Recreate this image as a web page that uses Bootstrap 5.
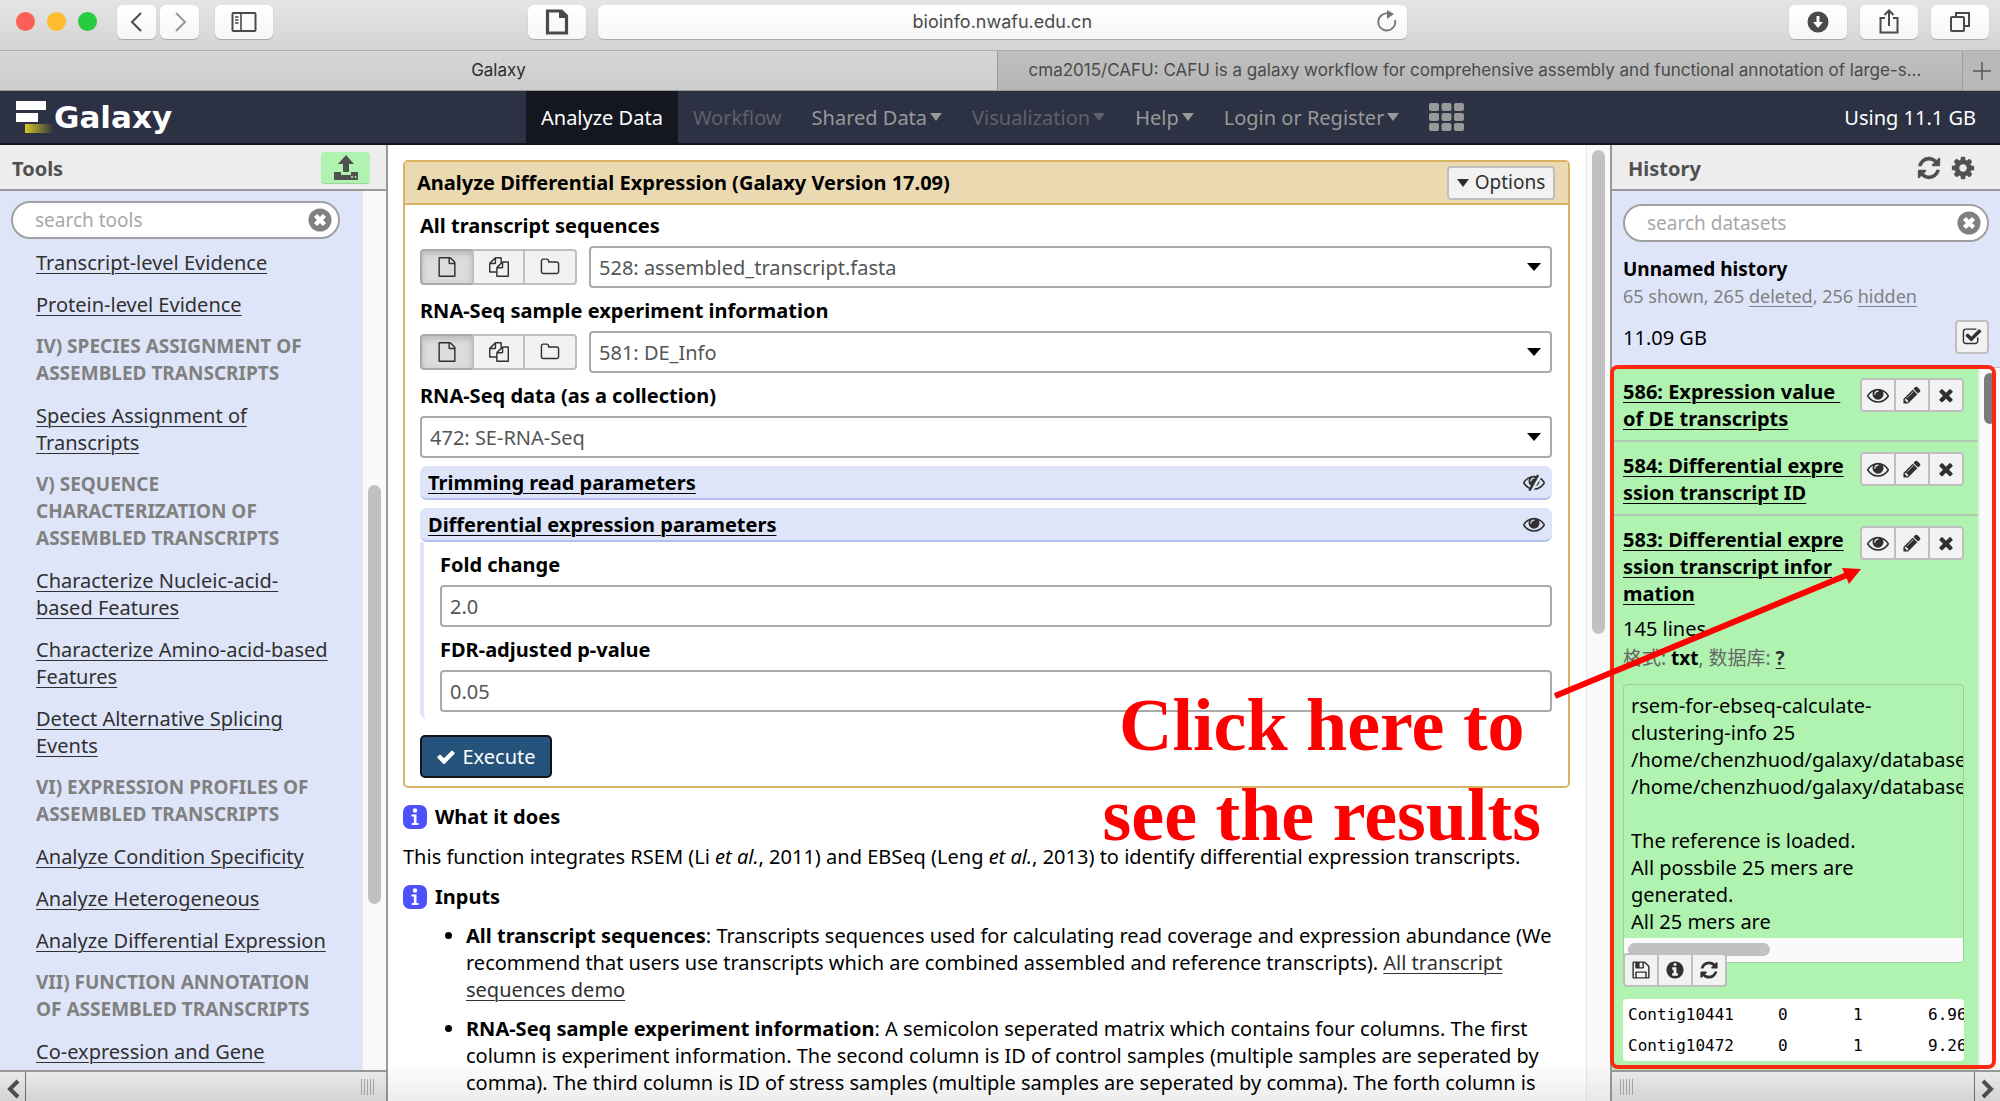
<!DOCTYPE html>
<html lang="en">
<head>
<meta charset="utf-8">
<meta name="viewport" content="width=device-width, initial-scale=1">
<title>Galaxy</title>
<link rel="stylesheet" href="https://cdn.jsdelivr.net/npm/bootstrap@5.3.0/dist/css/bootstrap.min.css">
<style>
  body { font-family: "Noto Sans", "Noto Sans CJK SC", sans-serif; font-size: 20px; line-height: 27px; color: #000; background: #fff; }
  a { color: #303030; text-underline-offset: 3px; text-decoration-thickness: 1px; }
  button { font: inherit; }
  .ico { width: 20px; height: 20px; fill: currentColor; flex: none; display: block; }

  /* browser window */
  .chrome-font { font-family: Inter, "Liberation Sans", sans-serif; color: #3c3c3c; }
  .toolbar { height: 51px; padding: 5px 11px 12px 16px; background: linear-gradient(#e5e5e5, #d4d4d4); border-bottom: 1px solid #adadad; }
  .dot { width: 19px; height: 19px; border-radius: 50%; margin-right: 12px; }
  .tbtn { height: 34px; width: 58px; padding: 0; border: 0; border-radius: 6px; background: linear-gradient(#fff, #f6f6f6); box-shadow: 0 1px 1px #a5a5a5; color: #4a4a4a; display: flex; align-items: center; justify-content: center; }
  .tbtn.half { width: 39px; }
  .tbtn svg { width: 28px; height: 28px; fill: none; stroke: currentColor; stroke-width: 2; }
  .addr { width: 41%; height: 34px; border-radius: 6px; background: linear-gradient(#fff, #f6f6f6); box-shadow: 0 1px 1px #a5a5a5; font-size: 18px; color: #4a4a4a; position: relative; }
  .addr input { border: 0; background: none; width: 100%; height: 34px; text-align: center; color: inherit; font: inherit; }
  .addr button { position: absolute; right: 8px; top: 5px; border: 0; background: none; padding: 0; color: #777; }
  .space-l { flex: 2; }
  .space-r { flex: 3; }
  .tabs { height: 40px; font-size: 17px; border-bottom: 1px solid #999; background: #b9b9b9; }
  .tabs a { color: #4a4a4a; text-decoration: none; display: flex; align-items: center; justify-content: center; white-space: nowrap; }
  .tab-on { background: linear-gradient(#d6d6d6, #cdcdcd); flex: 0 0 49.85%; }
  .tabs .tab-on { color: #2c2c2c; }
  .tab-off { border-left: 1px solid #9c9c9c; background: linear-gradient(#c0c0c0, #b5b5b5); padding-right: 10px; }
  .tab-add { width: 38px; border: 0; border-left: 1px solid #9c9c9c; background: none; padding: 0; color: #555; }

  /* masthead */
  .masthead { height: 54px; background: #2c3143; border-bottom: 2px solid #14161f; }
  .brand { font-family: "DejaVu Sans", sans-serif; font-weight: 700; font-size: 31px; color: #fff; text-decoration: none; width: 526px; }
  .masthead nav a { color: #999; text-decoration: none; padding: 0 15px; height: 52px; display: flex; align-items: center; white-space: nowrap; }
  .masthead nav a.on { background: #151720; color: #fff; }
  .masthead nav a.off { color: #5f6169; }
  .tri::after { content: ""; border: 6px solid transparent; border-top: 8px solid; border-bottom: 0; margin-left: 3px; }

  /* side panels */
  .side { background: #dfe5f9; display: flex; flex-direction: column; min-height: 0; min-width: 0; }
  .side-left { flex: 0 0 388px; border-right: 2px solid #999; }
  .side-right { flex: 0 0 390px; border-left: 2px solid #999; }
  .side-head { height: 46px; flex: none; background: #ededed; border-bottom: 2px solid #999; color: #505050; font-weight: 700; padding-top: 2px; }
  .upload { width: 49px; height: 32px; background: #b0f3b0; border: 0; border-bottom: 1px solid #9bd69b; border-radius: 4px; color: #505050; padding: 0; }
  .iconbtn { border: 0; background: none; padding: 0; color: #505050; }
  .pill { position: relative; font-size: 19px; }
  .pill input { width: 100%; height: 38px; border: 2px solid #a0a0a0; border-radius: 19px; padding: 0 40px 0 22px; background: #fff; color: #555; }
  .pill input::placeholder { color: #a8a8a8; }
  .pill button { position: absolute; right: 8px; top: 7px; }
  .foot { height: 31px; flex: none; background: linear-gradient(#ededed, #e4e4e4); border-top: 2px solid #999; color: #505050; }
  .foot button { width: 26px; border: 0; background: none; padding: 0; color: inherit; }
  .grip { width: 13px; height: 16px; background: repeating-linear-gradient(90deg, #aaa 0 1px, transparent 1px 3px); }
  .gutter { width: 24px; flex: none; background: #fafafa; border-left: 1px solid #e8e8e8; position: relative; }
  .thumb { position: absolute; left: 5px; width: 13px; border-radius: 7px; background: #c1c1c1; }

  .toollist { padding: 10px 20px 0 36px; overflow: hidden; }
  .toollist a, .toollist h2 { display: block; font-size: 20px; line-height: 27px; margin: 0 0 15px; white-space: nowrap; }
  .toollist h2 { color: #808080; font-weight: 700; font-size: 19px; }

  /* tool form */
  .work { flex: 1; min-width: 0; padding: 15px 16px 0 15px; overflow: hidden; }
  .tool { border: 2px solid #d8b365; border-radius: 5px; }
  .tool-head { background: #ebd9b2; border-bottom: 2px solid #d8b365; height: 43px; padding: 0 13px 0 12px; }
  .tool-head h1, .tool label, .helptext h2 { font-size: 20px; font-weight: 700; line-height: 27px; margin: 0; }
  .galbtn { background: #f2f2f2; border: 2px solid #bfbfbf; border-radius: 4px; color: #303030; padding: 0; display: flex; align-items: center; justify-content: center; }
  .opts { width: 108px; height: 34px; gap: 6px; font-size: 19px; }
  .opts::before { content: ""; border: 6px solid transparent; border-top: 8px solid; border-bottom: 0; }
  .tool-body { padding: 7px 16px 8px 15px; }
  .tool-body label { display: block; margin-bottom: 7px; }
  .gap-b { margin-bottom: 9px; }
  .pick { position: relative; flex: 1; }
  .pick::after { content: ""; position: absolute; right: 11px; top: 17px; border: 7px solid transparent; border-top: 8px solid #000; border-bottom: 0; pointer-events: none; }
  .field { width: 100%; height: 42px; border: 2px solid #aaa; border-radius: 4px; background: #fff; color: #555; padding: 0 8px; appearance: none; display: block; font: inherit; }
  .srcs { width: 157px; height: 36px; }
  .srcs .galbtn { flex: 1; border-radius: 0; border-right-width: 0; }
  .srcs .galbtn:first-child { border-radius: 4px 0 0 4px; }
  .srcs .galbtn:last-child { border-radius: 0 4px 4px 0; border-right-width: 2px; }
  .srcs .galbtn.pressed { background: #dcdcdc; box-shadow: inset 0 3px 6px #b8b8b8; border-color: #aaa; }
  .sect { height: 34px; background: #dfe5f9; border-bottom: 2px solid #b4c1f0; border-radius: 7px; padding: 0 7px 0 8px; font-weight: 700; margin-top: 8px; }
  .sect a { color: #000; }
  .sect svg { color: #303030; }
  .nested { border-left: 4px solid #dfe5f9; border-bottom-left-radius: 7px; padding: 9px 0 7px 16px; margin-bottom: 16px; }
  .run { width: 132px; height: 43px; background: #25537b; border: 2px solid #10131a; border-radius: 5px; color: #fff; padding: 0; gap: 6px; }
  .helptext { padding-top: 15px; }
  .helptext ul { padding-left: 63px; margin: 12px 0 0; }
  .helptext li { margin-bottom: 12px; padding: 0; white-space: nowrap; }
  .helptext p { margin: 13px 0; white-space: nowrap; }

  /* history */
  .meta { padding: 13px 11px 0 11px; height: 177px; flex: none; border-bottom: 1px solid #bfbfbf; }
  .meta-row { margin-top: 10px; }
  .hist { flex: 1; min-height: 0; position: relative; background: #fafafa; }
  .sets { background: #b0f3b0; overflow: hidden; flex: 1; min-width: 0; border-right: 2px solid #e6efe6; }
  .frame { position: absolute; inset: -3px 4px 1px -2px; border: 4px solid #ff2712; border-radius: 8px; pointer-events: none; }
  .entry { padding: 10px 14px 8px 11px; border-bottom: 2px solid #b0c9b0; }
  .entry h3 { font-size: 20px; line-height: 27px; margin: 0; white-space: nowrap; }
  .entry h3 a { color: #000; font-weight: 700; }
  .trio { width: 104px; height: 34px; flex: none; }
  .trio .galbtn { flex: 1; border-radius: 0; border-right-width: 0; }
  .trio .galbtn:first-child { border-radius: 4px 0 0 4px; }
  .trio .galbtn:last-child { border-radius: 0 4px 4px 0; border-right-width: 2px; }
  .log { border: 1px solid #9cce9c; border-radius: 4px; height: 279px; margin-top: 12px; overflow: hidden; display: flex; flex-direction: column; }
  .log pre { margin: 0; padding: 7px 0 0 7px; font: inherit; overflow: hidden; flex: 1; }
  .hbar { height: 24px; flex: none; background: #fafafa; padding: 5px 4px; }
  .hbar div { width: 142px; height: 13px; border-radius: 7px; background: #c1c1c1; }
  .over { margin-top: -10px; position: relative; }
  .peek { background: #fff; border-radius: 4px; margin-top: 12px; overflow: hidden; }
  .peek table { font-family: "DejaVu Sans Mono", monospace; font-size: 16px; line-height: 31px; white-space: nowrap; table-layout: fixed; width: 400px; }
  .peek td { padding: 0 0 0 5px; }

  /* annotation over the page */
  .note { position: absolute; top: 680px; right: 459px; font: 700 74px/90px "Liberation Serif", serif; color: #f00; text-align: center; pointer-events: none; }
  .arrow { position: absolute; top: 560px; right: 130px; width: 320px; height: 145px; pointer-events: none; }
  .fade-low { position: absolute; left: 0; right: 0; bottom: 0; height: 40px; background: linear-gradient(transparent, rgba(0,0,0,.07)); pointer-events: none; }
</style>
<script src="https://cdn.jsdelivr.net/npm/bootstrap@5.3.0/dist/js/bootstrap.bundle.min.js"></script>
</head>
<body class="d-flex flex-column vh-100 overflow-hidden position-relative">
<svg class="d-none" xmlns="http://www.w3.org/2000/svg">
  <symbol id="i-eye" viewBox="0 0 1792 1792"><path d="M1664 960q-152-236-381-353 61 104 61 225 0 185-131.500 316.500t-316.500 131.500-316.500-131.500-131.500-316.500q0-121 61-225-229 117-381 353 133 205 333.500 326.500t434.500 121.500 434.500-121.500 333.500-326.500zm-720-384q0-20-14-34t-34-14q-125 0-214.500 89.500t-89.500 214.500q0 20 14 34t34 14 34-14 14-34q0-86 61-147t147-61q20 0 34-14t14-34zm848 384q0 34-20 69-140 230-376.500 368.500t-499.500 138.500-499.500-139-376.500-368q-20-35-20-69t20-69q140-229 376.500-368t499.500-139 499.500 139 376.500 368q20 35 20 69z"/></symbol>
  <symbol id="i-eyeslash" viewBox="0 0 1792 1792"><path d="M555 1335l78-141q-87-63-136-159t-49-203q0-121 61-225-229 117-381 353 167 258 427 375zm389-759q0-20-14-34t-34-14q-125 0-214.500 89.500t-89.500 214.500q0 20 14 34t34 14 34-14 14-34q0-86 61-147t147-61q20 0 34-14t14-34zm363-191q0 7-1 9-106 189-316 567t-315 566l-49 89q-10 16-28 16-12 0-134-70-16-10-16-28 0-12 44-87-143-65-263.500-173t-208.500-245q-20-31-20-69t20-69q153-235 380-371t496-136q89 0 180 17l54-97q10-16 28-16 5 0 18 6t31 15.500 33 18.500 31.500 18.500 19.500 11.500q16 10 16 27zm37 447q0 139-79 253.500t-209 164.500l280-502q8 45 8 84zm448 128q0 35-20 69-39 64-109 145-150 172-347.500 267t-419.500 95l74-132q212-18 392.500-137t301.500-307q-115-179-282-294l63-112q95 64 182.500 153t144.500 184q20 34 20 69z"/></symbol>
  <symbol id="i-pencil" viewBox="0 0 1792 1792"><path d="M491 1536l91-91-235-235-91 91v107h128v128h107zm523-928q0-22-22-22-10 0-17 7l-542 542q-7 7-7 17 0 22 22 22 10 0 17-7l542-542q7-7 7-17zm-54-192l416 416-832 832h-416v-416zm683 96q0 53-37 90l-166 166-416-416 166-165q36-38 90-38 53 0 91 38l235 234q37 39 37 91z"/></symbol>
  <symbol id="i-times" viewBox="0 0 1792 1792"><path d="M1490 1322q0 40-28 68l-136 136q-28 28-68 28t-68-28l-294-294-294 294q-28 28-68 28t-68-28l-136-136q-28-28-28-68t28-68l294-294-294-294q-28-28-28-68t28-68l136-136q28-28 68-28t68 28l294 294 294-294q28-28 68-28t68 28l136 136q28 28 28 68t-28 68l-294 294 294 294q28 28 28 68z"/></symbol>
  <symbol id="i-clear" viewBox="0 0 24 24"><circle cx="12" cy="12" r="11.500" fill="#808080"/><path d="M7.500 7.500l9 9M16.500 7.500l-9 9" stroke="#fff" stroke-width="4.400"/></symbol>
  <symbol id="i-cog" viewBox="0 0 1792 1792"><path d="M1152 896q0-106-75-181t-181-75-181 75-75 181 75 181 181 75 181-75 75-181zm512-109v222q0 12-8 23t-20 13l-185 28q-19 54-39 91 35 50 107 138 10 12 10 25t-9 23q-27 37-99 108t-94 71q-12 0-26-9l-138-108q-44 23-91 38-16 136-29 186-7 28-36 28h-222q-14 0-24.500-8.500t-11.500-21.500l-28-184q-49-16-90-37l-141 107q-10 9-25 9-14 0-25-11-126-114-165-168-7-10-7-23 0-12 8-23 15-21 51-66.500t54-70.500q-27-50-41-99l-183-27q-13-2-21-12.500t-8-23.500v-222q0-12 8-23t19-13l186-28q14-46 39-92-40-57-107-138-10-12-10-24 0-10 9-23 26-36 98.500-107.500t94.500-71.500q13 0 26 10l138 107q44-23 91-38 16-136 29-186 7-28 36-28h222q14 0 24.500 8.500t11.500 21.500l28 184q49 16 90 37l142-107q9-9 24-9 13 0 25 10 129 119 165 170 7 8 7 22 0 12-8 23-15 21-51 66.500t-54 70.500q26 50 41 98l183 28q13 2 21 12.500t8 23.500z"/></symbol>
  <symbol id="i-refresh" viewBox="0 0 1792 1792"><path d="M1639 1056q0 5-1 7-64 268-268 434.500t-478 166.500q-146 0-282.500-55t-243.500-157l-129 129q-19 19-45 19t-45-19-19-45v-448q0-26 19-45t45-19h448q26 0 45 19t19 45-19 45l-137 137q71 66 161 102t187 36q134 0 250-65t186-179q11-17 53-117 8-23 30-23h192q13 0 22.500 9.500t9.500 22.500zm25-800v448q0 26-19 45t-45 19h-448q-26 0-45-19t-19-45 19-45l138-138q-148-137-349-137-134 0-250 65t-186 179q-11 17-53 117-8 23-30 23h-199q-13 0-22.500-9.500t-9.500-22.500v-7q65-268 270-434.500t480-166.500q146 0 284 55.500t245 156.500l130-129q19-19 45-19t45 19 19 45z"/></symbol>
  <symbol id="i-info" viewBox="0 0 1792 1792"><path d="M1152 1376v-160q0-14-9-23t-23-9h-96v-512q0-14-9-23t-23-9h-320q-14 0-23 9t-9 23v160q0 14 9 23t23 9h96v320h-96q-14 0-23 9t-9 23v160q0 14 9 23t23 9h448q14 0 23-9t9-23zm-128-896v-160q0-14-9-23t-23-9h-192q-14 0-23 9t-9 23v160q0 14 9 23t23 9h192q14 0 23-9t9-23zm640 416q0 209-103 385.500t-279.500 279.500-385.500 103-385.500-103-279.500-279.500-103-385.500 103-385.500 279.500-279.500 385.500-103 385.500 103 279.500 279.500 103 385.500z"/></symbol>
  <symbol id="i-check" viewBox="0 0 1792 1792"><path d="M1671 566q0 40-28 68l-724 724-136 136q-28 28-68 28t-68-28l-136-136-362-362q-28-28-28-68t28-68l136-136q28-28 68-28t68 28l294 295 656-657q28-28 68-28t68 28l136 136q28 28 28 68z"/></symbol>
  <symbol id="i-save" viewBox="0 0 1792 1792"><path d="M512 1536h768v-384h-768v384zm896 0h128v-896q0-14-10-38.500t-20-34.500l-281-281q-10-10-34-20t-39-10v416q0 40-28 68t-68 28h-576q-40 0-68-28t-28-68v-416h-128v1280h128v-416q0-40 28-68t68-28h832q40 0 68 28t28 68v416zm-384-928v-320q0-13-9.500-22.500t-22.500-9.500h-192q-13 0-22.500 9.500t-9.500 22.500v320q0 13 9.500 22.500t22.500 9.500h192q13 0 22.500-9.500t9.500-22.500zm640 32v928q0 40-28 68t-68 28h-1344q-40 0-68-28t-28-68v-1344q0-40 28-68t68-28h928q40 0 88 20t76 48l280 280q28 28 48 76t20 88z"/></symbol>
  <symbol id="i-file" viewBox="0 0 1792 1792"><path d="M1596 380q28 28 48 76t20 88v1152q0 40-28 68t-68 28h-1344q-40 0-68-28t-28-68v-1600q0-40 28-68t68-28h896q40 0 88 20t76 48zm-444-244v376h376q-10-29-22-41l-313-313q-12-12-41-22zm384 1528v-1024h-416q-40 0-68-28t-28-68v-416h-768v1536h1280z"/></symbol>
  <symbol id="i-files" viewBox="0 0 1792 1792"><path d="M1696 384q40 0 68 28t28 68v1216q0 40-28 68t-68 28h-960q-40 0-68-28t-28-68v-288h-544q-40 0-68-28t-28-68v-672q0-40 20-88t48-76l408-408q28-28 76-48t88-20h416q40 0 68 28t28 68v328q68-40 128-40h416zm-544 213l-299 299h299v-299zm-640-384l-299 299h299v-299zm196 647l316-316v-416h-384v416q0 40-28 68t-68 28h-416v640h512v-256q0-40 20-88t48-76zm956 804v-1152h-384v416q0 40-28 68t-68 28h-416v640h896z"/></symbol>
  <symbol id="i-folder" viewBox="0 0 1792 1792"><path d="M1600 1312v-704q0-40-28-68t-68-28h-704q-40 0-68-28t-28-68v-64q0-40-28-68t-68-28h-320q-40 0-68 28t-28 68v960q0 40 28 68t68 28h1216q40 0 68-28t28-68zm128-704v704q0 92-66 158t-158 66h-1216q-92 0-158-66t-66-158v-960q0-92 66-158t158-66h320q92 0 158 66t66 158v32h672q92 0 158 66t66 158z"/></symbol>
  <symbol id="i-tick" viewBox="0 0 1792 1792"><path d="M1472 930v318q0 119-84.500 203.500t-203.500 84.500h-832q-119 0-203.500-84.500t-84.500-203.500v-832q0-119 84.500-203.500t203.500-84.500h832q63 0 117 25 15 7 18 23 3 17-9 29l-49 49q-10 10-23 10-3 0-9-2-23-6-45-6h-832q-66 0-113 47t-47 113v832q0 66 47 113t113 47h832q66 0 113-47t47-113v-254q0-13 9-22l64-64q10-10 23-10 6 0 12 3 20 8 20 29zm231-489l-814 814q-24 24-57 24t-57-24l-430-430q-24-24-24-57t24-57l110-110q24-24 57-24t57 24l263 263 647-647q24-24 57-24t57 24l110 110q24 24 24 57t-24 57z"/></symbol>
  <symbol id="i-infobox" viewBox="0 0 24 24"><rect width="24" height="24" rx="7" fill="#4e50fb"/><circle cx="12" cy="5.500" r="2.200" fill="#fff"/><path d="M8.500 9.500h5v8.500h2v2H8.800v-2h2v-6.500H8.500z" fill="#fff"/></symbol>
</svg>

<header class="chrome-font">
  <div class="toolbar d-flex align-items-center">
    <span class="dot" style="background:#fc5f57"></span>
    <span class="dot" style="background:#fdbd2e"></span>
    <span class="dot" style="background:#28ca41"></span>
    <button class="tbtn half ms-2 me-1" aria-label="Back"><svg viewBox="0 0 28 28"><path d="M18 5l-9 9 9 9"/></svg></button>
    <button class="tbtn half me-3" aria-label="Forward"><svg viewBox="0 0 28 28" opacity=".55"><path d="M10 5l9 9-9 9"/></svg></button>
    <button class="tbtn" aria-label="Sidebar"><svg viewBox="0 0 28 28"><rect x="2.500" y="5" width="23" height="18" rx="1"/><path d="M11 5v18M5 9h3.500M5 12h3.500M5 15h3.500" stroke-width="1.600"/></svg></button>
    <div class="space-l"></div>
    <button class="tbtn me-2" aria-label="Page"><svg viewBox="0 0 28 28"><path d="M4.500 3h14l5 5v17h-19z" stroke-width="3.200"/><path d="M17 3v6h6" fill="currentColor"/></svg></button>
    <div class="addr ms-1">
      <input type="text" value="bioinfo.nwafu.edu.cn" aria-label="Address">
      <button aria-label="Reload"><svg class="ico" viewBox="0 0 24 24" style="width:24px;height:24px"><path d="M20 10a8.500 8.500 0 1 1-6-6.200" fill="none" stroke="currentColor" stroke-width="1.800"/><path d="M12 0l7 4-7 5z"/></svg></button>
    </div>
    <div class="space-r"></div>
    <div class="d-flex" style="gap:13px">
      <button class="tbtn" aria-label="Downloads"><svg viewBox="0 0 28 28"><circle cx="14" cy="14" r="10.500" fill="currentColor" stroke="none"/><path d="M14 8v9" stroke="#fff" stroke-width="3"/><path d="M9 14h10l-5 6z" fill="#fff" stroke="none"/></svg></button>
      <button class="tbtn" aria-label="Share"><svg viewBox="0 0 28 28"><path d="M10 10H5.500v14.500h17V10H18M14 18V3M9.500 7L14 2.500 18.500 7"/></svg></button>
      <button class="tbtn" aria-label="Tabs"><svg viewBox="0 0 28 28"><rect x="5" y="9" width="13" height="14" rx="1"/><path d="M10 8V5h13v13h-4"/></svg></button>
    </div>
  </div>
  <div class="tabs d-flex">
    <a href="#" class="tab-on">Galaxy</a>
    <a href="#" class="tab-off flex-fill">cma2015/CAFU: CAFU is a galaxy workflow for comprehensive assembly and functional annotation of large-s...</a>
    <button class="tab-add" aria-label="New tab"><svg width="20" height="20" viewBox="0 0 20 20"><path d="M10 1v18M1 10h18" stroke="currentColor" stroke-width="1.500"/></svg></button>
  </div>
</header>

<div class="masthead d-flex align-items-center flex-shrink-0">
  <a href="#" class="brand d-flex align-items-center ps-3">
    <svg width="38" height="34" viewBox="0 0 38 34"><defs><linearGradient id="gold"><stop offset="0" stop-color="#d8c62a"/><stop offset="1" stop-color="#d8c62a" stop-opacity="0"/></linearGradient></defs><rect y="1" width="30" height="9" fill="#fff"/><rect y="13" width="22" height="9" fill="#fff"/><rect x="9" y="24" width="29" height="9" fill="url(#gold)"/></svg>
    <span>Galaxy</span>
  </a>
  <nav class="d-flex align-items-center">
    <a href="#" class="on">Analyze Data</a>
    <a href="#" class="off">Workflow</a>
    <a href="#" class="tri">Shared Data</a>
    <a href="#" class="tri off">Visualization</a>
    <a href="#" class="tri">Help</a>
    <a href="#" class="tri">Login or Register</a>
    <a href="#" aria-label="Apps"><svg width="35" height="28" viewBox="0 0 35 28" fill="#999"><g id="r3"><rect width="10" height="8" rx="2"/><rect x="12.500" width="10" height="8" rx="2"/><rect x="25" width="10" height="8" rx="2"/></g><use href="#r3" y="10"/><use href="#r3" y="20"/></svg></a>
  </nav>
  <span class="ms-auto text-white me-4">Using 11.1 GB</span>
</div>

<main class="d-flex flex-fill" style="min-height:0">
  <aside class="side side-left">
    <div class="side-head d-flex align-items-center justify-content-between ps-2 pe-3"><span class="ps-1">Tools</span>
      <button class="upload d-flex align-items-center justify-content-center" aria-label="Upload"><svg class="ico" viewBox="0 0 26 26" style="width:26px;height:26px"><path d="M13 0l8 9h-5v8h-6V9H5zM1 17h7v3h10v-3h7v7q0 1-1 1H2q-1 0-1-1z"/><circle cx="19" cy="22" r="1" fill="#b0f3b0"/><circle cx="22.500" cy="22" r="1" fill="#b0f3b0"/></svg></button>
    </div>
    <div class="d-flex flex-fill" style="min-height:0">
      <div class="flex-fill overflow-hidden">
        <div class="pill" style="margin:10px 22px 0 11px"><input type="text" placeholder="search tools" aria-label="search tools"><button class="iconbtn" aria-label="Clear"><svg class="ico" style="width:24px;height:24px"><use href="#i-clear"/></svg></button></div>
        <div class="toollist">
          <a href="#">Transcript-level Evidence</a>
          <a href="#">Protein-level Evidence</a>
          <h2>IV) SPECIES ASSIGNMENT OF<br>ASSEMBLED TRANSCRIPTS</h2>
          <a href="#">Species Assignment of<br>Transcripts</a>
          <h2>V) SEQUENCE<br>CHARACTERIZATION OF<br>ASSEMBLED TRANSCRIPTS</h2>
          <a href="#">Characterize Nucleic-acid-<br>based Features</a>
          <a href="#">Characterize Amino-acid-based<br>Features</a>
          <a href="#">Detect Alternative Splicing<br>Events</a>
          <h2>VI) EXPRESSION PROFILES OF<br>ASSEMBLED TRANSCRIPTS</h2>
          <a href="#">Analyze Condition Specificity</a>
          <a href="#">Analyze Heterogeneous</a>
          <a href="#">Analyze Differential Expression</a>
          <h2>VII) FUNCTION ANNOTATION<br>OF ASSEMBLED TRANSCRIPTS</h2>
          <a href="#">Co-expression and Gene</a>
        </div>
      </div>
      <div class="gutter"><div class="thumb" style="top:33.400%;height:47.700%"></div></div>
    </div>
    <div class="foot d-flex align-items-center justify-content-between pe-2">
      <button class="border-end border-secondary h-100" aria-label="Hide tools"><svg width="16" height="20" viewBox="0 0 16 20"><path d="M13 2l-8 8 8 8" fill="none" stroke="currentColor" stroke-width="4"/></svg></button>
      <span class="grip me-1"></span>
    </div>
  </aside>

  <section class="d-flex flex-fill" style="min-width:0">
    <div class="work">
      <form class="tool">
        <div class="tool-head d-flex align-items-center justify-content-between">
          <h1>Analyze Differential Expression (Galaxy Version 17.09)</h1>
          <button type="button" class="galbtn opts">Options</button>
        </div>
        <div class="tool-body">
          <label for="f1">All transcript sequences</label>
          <div class="d-flex align-items-center gap-b">
            <div class="srcs d-flex me-2">
              <button type="button" class="galbtn pressed" aria-label="Single"><svg class="ico"><use href="#i-file"/></svg></button>
              <button type="button" class="galbtn" aria-label="Multiple"><svg class="ico"><use href="#i-files"/></svg></button>
              <button type="button" class="galbtn" aria-label="Collection"><svg class="ico"><use href="#i-folder"/></svg></button>
            </div>
            <div class="pick ms-1"><select id="f1" class="field"><option>528: assembled_transcript.fasta</option></select></div>
          </div>
          <label for="f2">RNA-Seq sample experiment information</label>
          <div class="d-flex align-items-center gap-b">
            <div class="srcs d-flex me-2">
              <button type="button" class="galbtn pressed" aria-label="Single"><svg class="ico"><use href="#i-file"/></svg></button>
              <button type="button" class="galbtn" aria-label="Multiple"><svg class="ico"><use href="#i-files"/></svg></button>
              <button type="button" class="galbtn" aria-label="Collection"><svg class="ico"><use href="#i-folder"/></svg></button>
            </div>
            <div class="pick ms-1"><select id="f2" class="field"><option>581: DE_Info</option></select></div>
          </div>
          <label for="f3">RNA-Seq data (as a collection)</label>
          <div class="pick"><select id="f3" class="field"><option>472: SE-RNA-Seq</option></select></div>
          <div class="sect d-flex align-items-center justify-content-between"><a href="#">Trimming read parameters</a><svg class="ico" style="width:22px;height:22px"><use href="#i-eyeslash"/></svg></div>
          <div class="sect d-flex align-items-center justify-content-between"><a href="#">Differential expression parameters</a><svg class="ico" style="width:22px;height:22px"><use href="#i-eye"/></svg></div>
          <div class="nested">
            <label for="f4">Fold change</label>
            <input id="f4" type="text" class="field gap-b" value="2.0">
            <label for="f5">FDR-adjusted p-value</label>
            <input id="f5" type="text" class="field" value="0.05">
          </div>
          <button type="button" class="run d-flex align-items-center justify-content-center"><svg class="ico"><use href="#i-check"/></svg>Execute</button>
        </div>
      </form>
      <div class="helptext">
        <div class="d-flex align-items-center gap-2"><svg class="ico" style="width:24px;height:24px"><use href="#i-infobox"/></svg><h2>What it does</h2></div>
        <p>This function integrates RSEM (Li <em>et al.</em>, 2011) and EBSeq (Leng <em>et al.</em>, 2013) to identify differential expression transcripts.</p>
        <div class="d-flex align-items-center gap-2"><svg class="ico" style="width:24px;height:24px"><use href="#i-infobox"/></svg><h2>Inputs</h2></div>
        <ul>
          <li><b>All transcript sequences</b>: Transcripts sequences used for calculating read coverage and expression abundance (We<br>recommend that users use transcripts which are combined assembled and reference transcripts). <a href="#">All transcript<br>sequences demo</a></li>
          <li><b>RNA-Seq sample experiment information</b>: A semicolon seperated matrix which contains four columns. The first<br>column is experiment information. The second column is ID of control samples (multiple samples are seperated by<br>comma). The third column is ID of stress samples (multiple samples are seperated by comma). The forth column is</li>
        </ul>
      </div>
    </div>
    <div class="gutter"><div class="thumb" style="top:5px;height:50.600%"></div></div>
  </section>

  <aside class="side side-right">
    <div class="side-head d-flex align-items-center ps-3"><span class="me-auto">History</span>
      <button class="iconbtn me-2" aria-label="Refresh"><svg class="ico" style="width:26px;height:26px"><use href="#i-refresh"/></svg></button>
      <button class="iconbtn me-4" aria-label="Settings"><svg class="ico" style="width:26px;height:26px"><use href="#i-cog"/></svg></button>
    </div>
    <div class="meta">
      <div class="pill"><input type="text" placeholder="search datasets" aria-label="search datasets"><button class="iconbtn" aria-label="Clear"><svg class="ico" style="width:24px;height:24px"><use href="#i-clear"/></svg></button></div>
      <div class="fw-bold" style="margin-top:14px;font-size:19px">Unnamed history</div>
      <div style="color:#808080;font-size:18px">65 shown, 265 <a href="#" style="color:inherit">deleted</a>, 256 <a href="#" style="color:inherit">hidden</a></div>
      <div class="meta-row d-flex align-items-center justify-content-between"><span>11.09 GB</span><button class="galbtn" style="width:34px;height:34px" aria-label="Select datasets"><svg class="ico"><use href="#i-tick"/></svg></button></div>
    </div>
    <div class="hist d-flex">
      <div class="sets">
        <div class="entry d-flex justify-content-between">
          <h3><a href="#">586: Expression value&nbsp;<br>of DE transcripts</a></h3>
          <div class="trio d-flex"><button class="galbtn" aria-label="View"><svg class="ico" style="width:22px;height:22px"><use href="#i-eye"/></svg></button><button class="galbtn" aria-label="Edit"><svg class="ico"><use href="#i-pencil"/></svg></button><button class="galbtn" aria-label="Delete"><svg class="ico"><use href="#i-times"/></svg></button></div>
        </div>
        <div class="entry d-flex justify-content-between">
          <h3><a href="#">584: Differential expre<br>ssion transcript ID</a></h3>
          <div class="trio d-flex"><button class="galbtn" aria-label="View"><svg class="ico" style="width:22px;height:22px"><use href="#i-eye"/></svg></button><button class="galbtn" aria-label="Edit"><svg class="ico"><use href="#i-pencil"/></svg></button><button class="galbtn" aria-label="Delete"><svg class="ico"><use href="#i-times"/></svg></button></div>
        </div>
        <div class="entry border-0">
          <div class="d-flex justify-content-between">
            <h3><a href="#">583: Differential expre<br>ssion transcript infor<br>mation</a></h3>
            <div class="trio d-flex"><button class="galbtn" aria-label="View"><svg class="ico" style="width:22px;height:22px"><use href="#i-eye"/></svg></button><button class="galbtn" aria-label="Edit"><svg class="ico"><use href="#i-pencil"/></svg></button><button class="galbtn" aria-label="Delete"><svg class="ico"><use href="#i-times"/></svg></button></div>
          </div>
          <div class="mt-2">145 lines</div>
          <div style="color:#666;margin-top:3px;font-size:19px">格式: <b class="text-black">txt</b>, 数据库: <a href="#" class="fw-bold">?</a></div>
          <div class="log">
<pre>rsem-for-ebseq-calculate-
clustering-info 25
/home/chenzhuod/galaxy/database
/home/chenzhuod/galaxy/database

The reference is loaded.
All possbile 25 mers are
generated.
All 25 mers are</pre>
            <div class="hbar"><div></div></div>
          </div>
          <div class="trio d-flex over"><button class="galbtn" aria-label="Download"><svg class="ico"><use href="#i-save"/></svg></button><button class="galbtn" aria-label="Details"><svg class="ico"><use href="#i-info"/></svg></button><button class="galbtn" aria-label="Run again"><svg class="ico"><use href="#i-refresh"/></svg></button></div>
          <div class="peek"><table>
            <colgroup><col style="width:150px"><col style="width:75px"><col style="width:75px"><col></colgroup>
            <tr><td>Contig10441</td><td>0</td><td>1</td><td>6.96</td></tr>
            <tr><td>Contig10472</td><td>0</td><td>1</td><td>9.26</td></tr>
          </table></div>
        </div>
      </div>
      <div style="width:20px"><div class="thumb" style="left:auto;right:4px;top:5px;width:12px;height:51px;background:#7b7b7b"></div></div>
      <div class="frame"></div>
    </div>
    <div class="foot d-flex align-items-center justify-content-between ps-2">
      <span class="grip"></span>
      <button class="border-start border-secondary h-100" aria-label="Hide history"><svg width="16" height="20" viewBox="0 0 16 20"><path d="M3 2l8 8-8 8" fill="none" stroke="currentColor" stroke-width="4"/></svg></button>
    </div>
  </aside>
</main>

<div class="fade-low"></div>
<svg class="arrow" viewBox="0 0 320 145"><path d="M5 136L297 15" stroke="#f00" stroke-width="6"/><path d="M311 9l-19-1 7 16z" fill="#f00"/></svg>
<div class="note">Click here to<br>see the results</div>
</body>
</html>
